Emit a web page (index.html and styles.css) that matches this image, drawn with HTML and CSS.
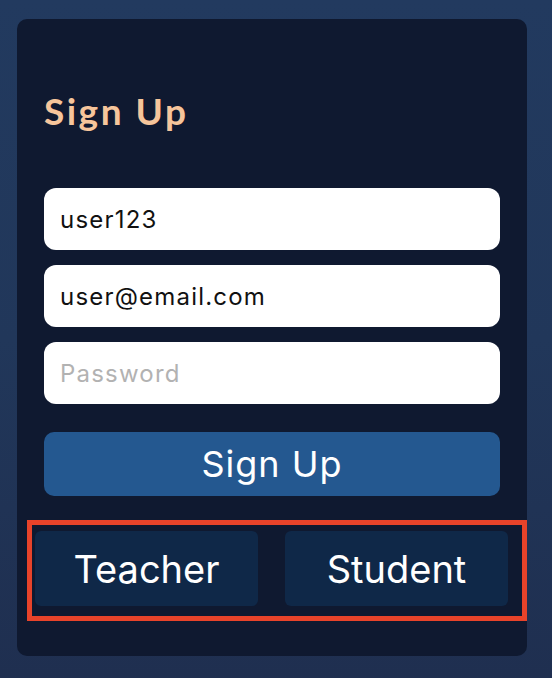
FILE: index.html
```html
<!DOCTYPE html>
<html lang="en">
<head>
<meta charset="utf-8">
<title>Sign Up</title>
<link rel="stylesheet" href="styles.css">
</head>
<body>
  <main class="card">
    <h1 class="title">Sign Up</h1>
    <form class="form">
      <input class="field" type="text" value="user123">
      <input class="field" type="email" value="user@email.com">
      <input class="field" type="password" placeholder="Password">
      <button class="submit" type="button">Sign Up</button>
    </form>
    <div class="roles">
      <button class="role" type="button">Teacher</button>
      <button class="role" type="button">Student</button>
    </div>
  </main>
</body>
</html>
```

FILE: styles.css
```css
html, body {
  margin: 0;
  padding: 0;
}

body {
  width: 552px;
  height: 678px;
  overflow: hidden;
  background: linear-gradient(180deg, #223a5f 0%, #21375a 50%, #1f2f50 100%);
  font-family: Inter, "Liberation Sans", sans-serif;
  padding: 19px 0 0 17px;
  box-sizing: border-box;
}

.card {
  width: 510px;
  height: 637px;
  box-sizing: border-box;
  background: #0f1930;
  border-radius: 10px;
  display: flex;
  flex-direction: column;
}

.title {
  margin: 72px 27px 0 27px;
  font-family: Lato, sans-serif;
  font-weight: 700;
  font-size: 37px;
  line-height: 40px;
  color: #f6c59b;
  letter-spacing: 2.5px;
}

.form {
  margin: 57px 27px 0 27px;
  display: flex;
  flex-direction: column;
  gap: 15px;
}

.field {
  height: 62px;
  box-sizing: border-box;
  border: none;
  border-radius: 12px;
  background: #ffffff;
  padding: 0 16px;
  font-family: Inter, "Liberation Sans", sans-serif;
  font-size: 24px;
  letter-spacing: 1.2px;
  color: #111111;
  outline: none;
}

.field::placeholder {
  color: #b2b2b2;
}

.submit {
  margin-top: 13px;
  height: 64px;
  border: none;
  border-radius: 10px;
  background: #245890;
  color: #ffffff;
  font-family: Inter, "Liberation Sans", sans-serif;
  font-size: 36px;
  letter-spacing: 1px;
  padding: 0;
}

.roles {
  margin: 24px 0 0 10px;
  height: 101px;
  box-sizing: border-box;
  border: 5px solid #e8432a;
  padding: 6px 14px 10px 3px;
  display: flex;
  gap: 27px;
}

.role {
  flex: 1;
  border: none;
  border-radius: 6px;
  background: #0f2848;
  color: #ffffff;
  font-family: Inter, "Liberation Sans", sans-serif;
  font-size: 38px;
  padding: 0;
}
```
